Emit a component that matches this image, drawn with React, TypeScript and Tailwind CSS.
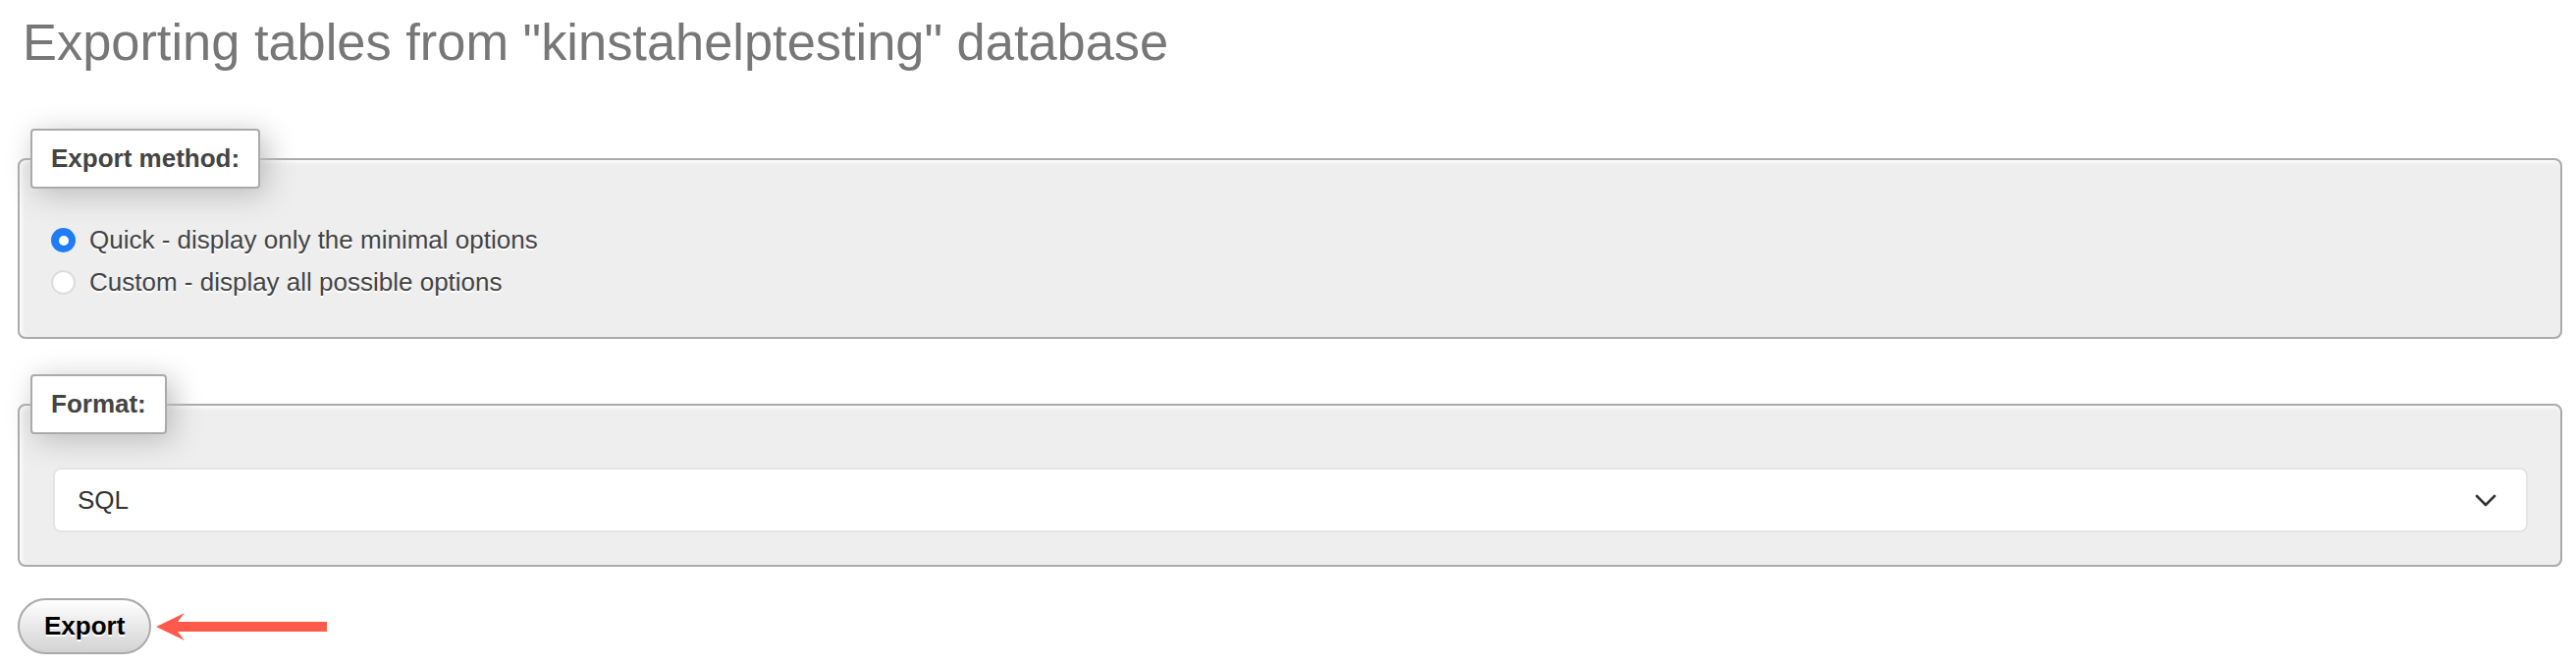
export default function App() {
  return (
    <div className="min-h-screen bg-white pl-[18px] pr-[14px] pt-[11px] font-['Liberation_Sans',Arial,sans-serif] text-[26px] text-[#444]">
      <h2 className="pl-[5px] text-[52.4px] font-normal leading-[64px] text-[#777] [text-shadow:0_2px_0_#fff]">
        Exporting tables from "kinstahelptesting" database
      </h2>

      {/* Export method */}
      <fieldset className="mt-[56px] rounded-[8px] border-2 border-[#aaa] bg-[#eee] px-[11px] pb-[34px] shadow-[inset_2px_2px_4px_#fff]">
        <legend className="rounded-[4px] border-2 border-[#aaa] bg-white px-[19px] py-[13px] font-bold leading-[31px] text-[#444] shadow-[6px_6px_30px_#bbb]">
          Export method:
        </legend>
        <div className="flex flex-col pl-[21px] pt-[31px] [text-shadow:0_2px_0_#fff]">
          <label className="flex h-[43px] items-center gap-[14px]">
            <span className="flex h-[25px] w-[25px] items-center justify-center rounded-full bg-[#1e7df6]">
              <span className="h-[10px] w-[10px] rounded-full bg-white" />
            </span>
            <span>Quick - display only the minimal options</span>
          </label>
          <label className="flex h-[43px] items-center gap-[14px]">
            <span className="h-[25px] w-[25px] rounded-full border-2 border-[#dcdcdc] bg-white" />
            <span>Custom - display all possible options</span>
          </label>
        </div>
      </fieldset>

      {/* Format */}
      <fieldset className="mt-[36px] rounded-[8px] border-2 border-[#aaa] bg-[#eee] px-[11px] pb-[33px] shadow-[inset_2px_2px_4px_#fff]">
        <legend className="rounded-[4px] border-2 border-[#aaa] bg-white px-[19px] py-[13px] font-bold leading-[31px] text-[#444] shadow-[6px_6px_30px_#bbb]">
          Format:
        </legend>
        <div className="pl-[23px] pr-[22px] pt-[34px]">
          <div className="flex h-[66px] items-center justify-between rounded-[8px] border-2 border-[#e4e4e4] bg-white pl-[23px] pr-[30px] text-[#333]">
            <span>SQL</span>
            <svg width="22" height="13" viewBox="0 0 22 13" fill="none">
              <path d="M2 2l9 9 9-9" stroke="#333" strokeWidth="2.6" strokeLinecap="round" strokeLinejoin="round" />
            </svg>
          </div>
        </div>
      </fieldset>

      <div className="mt-[32px] flex items-center">
        <button className="rounded-[40px] border-2 border-[#aaa] bg-linear-to-b from-white to-[#d3d3d3] px-[25px] py-[12px] font-bold leading-[29px] text-black [text-shadow:0_2px_0_#fff]">
          Export
        </button>
        <svg className="ml-[5px]" width="175" height="28" viewBox="0 0 175 28">
          <path d="M0 14L29 0L22 9H174V19H22L29 28Z" fill="#fd5a4c" />
        </svg>
      </div>
    </div>
  )
}
